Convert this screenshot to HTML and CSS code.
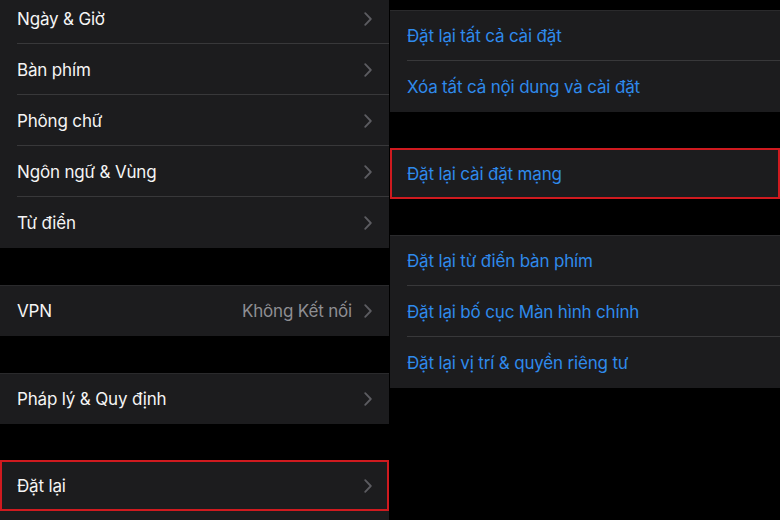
FILE: index.html
```html
<!DOCTYPE html>
<html lang="vi">
<head>
<meta charset="utf-8">
<title>Cài đặt</title>
<link rel="stylesheet" href="styles.css">
</head>
<body>
<div class="screen">
  <div class="pane pane-left">
    <div class="group">
      <div class="row"><span class="label">Ngày &amp; Giờ</span><span class="chev"><svg viewBox="0 0 8 14" width="8" height="14"><path d="M1.2 1.2 L6.8 7 L1.2 12.8" fill="none" stroke="currentColor" stroke-width="1.8" stroke-linecap="round" stroke-linejoin="round"/></svg></span></div>
      <div class="row"><span class="label">Bàn phím</span><span class="chev"><svg viewBox="0 0 8 14" width="8" height="14"><path d="M1.2 1.2 L6.8 7 L1.2 12.8" fill="none" stroke="currentColor" stroke-width="1.8" stroke-linecap="round" stroke-linejoin="round"/></svg></span></div>
      <div class="row"><span class="label">Phông chữ</span><span class="chev"><svg viewBox="0 0 8 14" width="8" height="14"><path d="M1.2 1.2 L6.8 7 L1.2 12.8" fill="none" stroke="currentColor" stroke-width="1.8" stroke-linecap="round" stroke-linejoin="round"/></svg></span></div>
      <div class="row"><span class="label">Ngôn ngữ &amp; Vùng</span><span class="chev"><svg viewBox="0 0 8 14" width="8" height="14"><path d="M1.2 1.2 L6.8 7 L1.2 12.8" fill="none" stroke="currentColor" stroke-width="1.8" stroke-linecap="round" stroke-linejoin="round"/></svg></span></div>
      <div class="row"><span class="label">Từ điển</span><span class="chev"><svg viewBox="0 0 8 14" width="8" height="14"><path d="M1.2 1.2 L6.8 7 L1.2 12.8" fill="none" stroke="currentColor" stroke-width="1.8" stroke-linecap="round" stroke-linejoin="round"/></svg></span></div>
    </div>
    <div class="group">
      <div class="row"><span class="label">VPN</span><span class="value">Không Kết nối</span><span class="chev"><svg viewBox="0 0 8 14" width="8" height="14"><path d="M1.2 1.2 L6.8 7 L1.2 12.8" fill="none" stroke="currentColor" stroke-width="1.8" stroke-linecap="round" stroke-linejoin="round"/></svg></span></div>
    </div>
    <div class="group">
      <div class="row"><span class="label">Pháp lý &amp; Quy định</span><span class="chev"><svg viewBox="0 0 8 14" width="8" height="14"><path d="M1.2 1.2 L6.8 7 L1.2 12.8" fill="none" stroke="currentColor" stroke-width="1.8" stroke-linecap="round" stroke-linejoin="round"/></svg></span></div>
    </div>
    <div class="group group-marked group-tail">
      <div class="row highlight"><span class="label">Đặt lại</span><span class="chev"><svg viewBox="0 0 8 14" width="8" height="14"><path d="M1.2 1.2 L6.8 7 L1.2 12.8" fill="none" stroke="currentColor" stroke-width="1.8" stroke-linecap="round" stroke-linejoin="round"/></svg></span></div>
      <div class="row"></div>
    </div>
  </div>
  <div class="pane pane-right">
    <div class="group">
      <div class="row"><span class="label action">Đặt lại tất cả cài đặt</span></div>
      <div class="row"><span class="label action">Xóa tất cả nội dung và cài đặt</span></div>
    </div>
    <div class="group group-marked">
      <div class="row highlight"><span class="label action">Đặt lại cài đặt mạng</span></div>
    </div>
    <div class="group">
      <div class="row"><span class="label action">Đặt lại từ điển bàn phím</span></div>
      <div class="row"><span class="label action">Đặt lại bố cục Màn hình chính</span></div>
      <div class="row"><span class="label action">Đặt lại vị trí &amp; quyền riêng tư</span></div>
    </div>
  </div>
</div>
</body>
</html>
```

FILE: styles.css
```css
* { box-sizing: border-box; }
html, body {
  margin: 0;
  padding: 0;
  background: #000;
}
body {
  width: 780px;
  height: 520px;
  overflow: hidden;
  font-family: Inter, "Noto Sans", "Liberation Sans", sans-serif;
  font-size: 17px;
  letter-spacing: -0.17px;
  color: #f4f4f4;
}
.screen {
  display: flex;
  gap: 1px;
  height: 520px;
  overflow: hidden;
}
.pane {
  display: flex;
  flex-direction: column;
  gap: 37px;
}
.pane-left {
  width: 389px;
  margin-top: -7px;
}
.pane-right {
  flex: 1;
  padding-top: 10px;
  gap: 36px;
}
.group {
  background: #1c1c1e;
  border-top: 1px solid #2a2a2c;
}
.group-marked {
  border-top: 0;
}
.group-tail {
  margin-top: -1px;
}
.row {
  height: 51px;
  display: flex;
  align-items: center;
  padding: 0 17px 0 17px;
  position: relative;
}
.group > .row:first-child { height: 50px; }
.group-marked > .row:first-child { height: 51px; }
.row + .row::before {
  content: "";
  position: absolute;
  top: -1px;
  left: 17px;
  right: 0;
  height: 1px;
  background: #38383a;
}
.label {
  flex: 1;
}
.value {
  color: #8e8e93;
  margin-right: 12px;
}
.chev {
  display: flex;
  color: #5c5c61;
}
.action {
  color: #2f8aeb;
}
.highlight {
  box-shadow: inset 0 0 0 2px #cf1a1f;
}
.highlight + .row::before { display: none; }
```
